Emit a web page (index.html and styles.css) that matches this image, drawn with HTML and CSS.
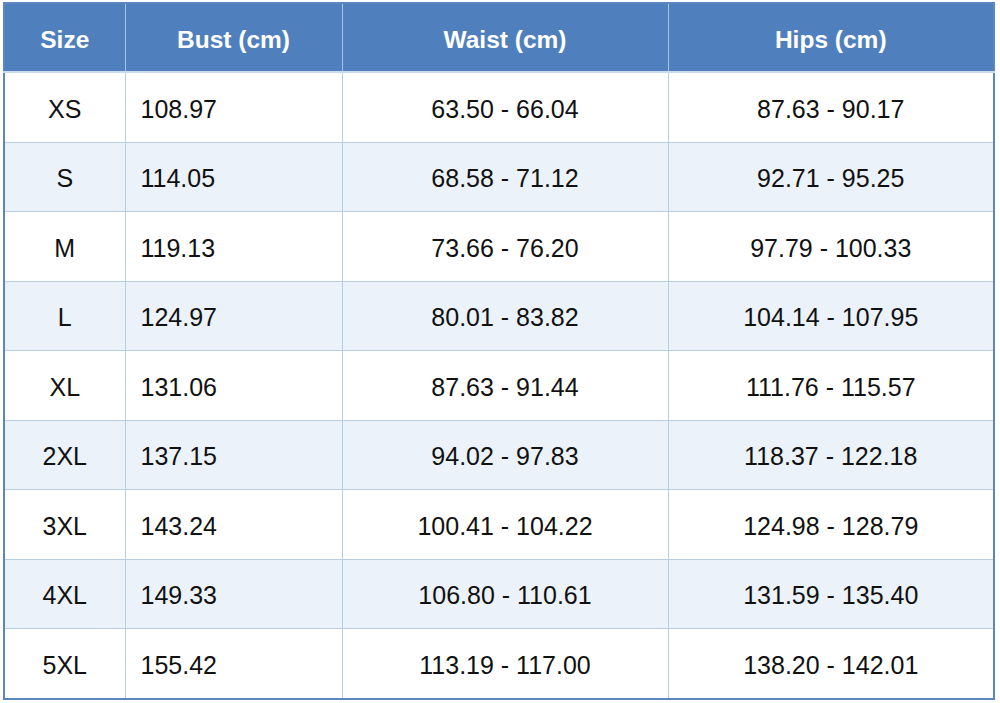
FILE: index.html
```html
<!DOCTYPE html>
<html>
<head>
<meta charset="utf-8">
<link rel="stylesheet" href="styles.css">
</head>
<body>
<table class="chart">
  <colgroup>
    <col class="c-size">
    <col class="c-bust">
    <col class="c-waist">
    <col class="c-hips">
  </colgroup>
  <thead>
    <tr><th>Size</th><th>Bust (cm)</th><th>Waist (cm)</th><th>Hips (cm)</th></tr>
  </thead>
  <tbody>
    <tr><td class="size">XS</td><td class="bust">108.97</td><td>63.50 - 66.04</td><td>87.63 - 90.17</td></tr>
    <tr><td class="size">S</td><td class="bust">114.05</td><td>68.58 - 71.12</td><td>92.71 - 95.25</td></tr>
    <tr><td class="size">M</td><td class="bust">119.13</td><td>73.66 - 76.20</td><td>97.79 - 100.33</td></tr>
    <tr><td class="size">L</td><td class="bust">124.97</td><td>80.01 - 83.82</td><td>104.14 - 107.95</td></tr>
    <tr><td class="size">XL</td><td class="bust">131.06</td><td>87.63 - 91.44</td><td>111.76 - 115.57</td></tr>
    <tr><td class="size">2XL</td><td class="bust">137.15</td><td>94.02 - 97.83</td><td>118.37 - 122.18</td></tr>
    <tr><td class="size">3XL</td><td class="bust">143.24</td><td>100.41 - 104.22</td><td>124.98 - 128.79</td></tr>
    <tr><td class="size">4XL</td><td class="bust">149.33</td><td>106.80 - 110.61</td><td>131.59 - 135.40</td></tr>
    <tr><td class="size">5XL</td><td class="bust">155.42</td><td>113.19 - 117.00</td><td>138.20 - 142.01</td></tr>
  </tbody>
</table>
</body>
</html>
```
FILE: styles.css
```css
html, body {
  margin: 0;
  padding: 0;
  background: #ffffff;
}
body {
  padding: 2px 0 0 3px;
  font-family: "Liberation Sans", Arial, sans-serif;
}
.chart {
  border-collapse: collapse;
  table-layout: fixed;
  width: 990px;
  border: 2px solid #5b86c0;
}
.c-size { width: 121px; }
.c-bust { width: 217px; }
.c-waist { width: 326px; }
.c-hips { width: 326px; }
.chart th {
  height: 62px;
  padding: 5px 0 0;
  background: #4f80bd;
  color: #ffffff;
  font-size: 24.5px;
  font-weight: bold;
  text-align: center;
  border-left: 1px solid #a9c3e4;
  border-bottom: 2px solid #c9d9ee;
}
.chart td {
  height: 65px;
  padding: 3.5px 0 0;
  font-size: 25px;
  color: #111111;
  text-align: center;
  border: 1px solid #b9cde6;
}
.chart td.bust {
  text-align: left;
  padding-left: 15px;
}
.chart tbody tr:nth-child(even) td {
  background: #ebf2fa;
}
```
